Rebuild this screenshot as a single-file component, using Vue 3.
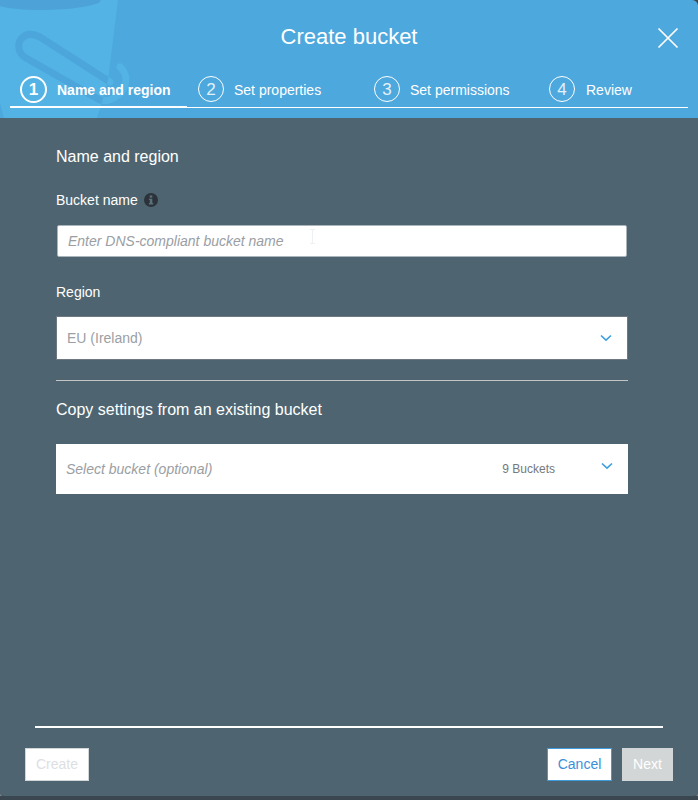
<script setup>
const steps = [
  { n: 1, label: 'Name and region', active: true },
  { n: 2, label: 'Set properties' },
  { n: 3, label: 'Set permissions' },
  { n: 4, label: 'Review' }
]
const handle = 'M120 67C127 73 128 83 122 91C116 99 106 103 98 99L26 58C17 53 17 42 23 37C28 33 34 34 40 37L110 82'
</script>

<template>
  <div class="modal">
    <header class="head">
      <svg class="art" width="140" height="118" viewBox="0 0 140 118" aria-hidden="true">
        <defs>
          <clipPath id="bucket-shape">
            <path d="M0 0H118L108 80Q103 100 97 118H4L0 103Z" />
          </clipPath>
        </defs>
        <path d="M0 0H118L108 80Q103 100 97 118H4L0 103Z" fill="#53b3e4" />
        <path d="M0 0H101C100 6 70 10 40 10C20 10 6 8 0 6Z" fill="#4da3d8" />
        <path :d="handle" fill="none" stroke="#53b3e4" stroke-width="7" stroke-linecap="round" />
        <g clip-path="url(#bucket-shape)">
          <path :d="handle" fill="none" stroke="#4da6db" stroke-width="7" stroke-linecap="round" />
        </g>
      </svg>
      <div class="title-row">
        <h1 class="title">Create bucket</h1>
        <svg class="close" width="22" height="22" viewBox="0 0 22 22" aria-label="Close">
          <path d="M1.5 1.5L20.5 20.5M20.5 1.5L1.5 20.5" stroke="#fff" stroke-width="1.7" fill="none" />
        </svg>
      </div>
      <nav class="tabs">
        <div v-for="s in steps" :key="s.n" class="tab" :class="{ active: s.active }">
          <span class="num">{{ s.n }}</span>
          <span class="tab-label">{{ s.label }}</span>
        </div>
      </nav>
    </header>

    <main class="body">
      <section class="form">
        <h2 class="section">Name and region</h2>
        <div class="label-row">
          <label class="label">Bucket name</label>
          <svg class="info" width="14" height="14" viewBox="0 0 14 14" aria-hidden="true">
            <circle cx="7" cy="7" r="7" fill="#2b3239" />
            <rect x="5.7" y="2.4" width="2.6" height="2.3" fill="#5c6f7c" />
            <path d="M4.9 5.7H8.3V10.1H9.2V11.5H4.9V10.1H5.8V7.1H4.9Z" fill="#5c6f7c" />
          </svg>
        </div>
        <div class="input">
          <span class="placeholder">Enter DNS-compliant bucket name</span>
          <span class="caret"></span>
        </div>
        <label class="label region-label">Region</label>
        <div class="select region">
          <span class="value">EU (Ireland)</span>
          <svg class="chev" width="12" height="8" viewBox="0 0 12 8" aria-hidden="true">
            <path d="M1 1.5L6 6.2L11 1.5" fill="none" stroke="#3b9fe0" stroke-width="1.6" />
          </svg>
        </div>
        <hr class="rule" />
        <h2 class="section copy">Copy settings from an existing bucket</h2>
        <div class="select bucket">
          <span class="placeholder small">Select bucket (optional)</span>
          <span class="count">9 Buckets</span>
          <svg class="chev up" width="12" height="8" viewBox="0 0 12 8" aria-hidden="true">
            <path d="M1 1.5L6 6.2L11 1.5" fill="none" stroke="#3b9fe0" stroke-width="1.6" />
          </svg>
        </div>
      </section>

      <footer class="foot">
        <div class="foot-line"></div>
        <div class="actions">
          <button class="btn create" type="button">Create</button>
          <div class="right">
            <button class="btn cancel" type="button">Cancel</button>
            <button class="btn next" type="button">Next</button>
          </div>
        </div>
      </footer>
    </main>
  </div>
</template>

<style>
html, body { margin: 0; background: linear-gradient(#3a4750 0 20px, #88979f 20px); }
</style>

<style scoped>
.modal {
  width: 698px;
  height: 796px;
  display: flex;
  flex-direction: column;
  font-family: "Liberation Sans", Arial, sans-serif;
  background: #4e6571;
  border-radius: 0 6px 5px 5px;
  box-shadow: 0 1px 2px #2f3a42;
  overflow: hidden;
}
.head {
  position: relative;
  height: 118px;
  flex: none;
  background: #4da8dd;
  color: #fff;
  box-sizing: border-box;
  overflow: hidden;
}
.art { position: absolute; left: 0; top: 0; }
.title-row {
  position: relative;
  height: 76px;
  display: flex;
  justify-content: center;
}
.title {
  margin: 24px 0 0;
  font-size: 22px;
  line-height: 26px;
  font-weight: 400;
}
.close { position: absolute; left: 657px; top: 27px; }
.tabs {
  position: relative;
  margin: 0 10px;
  width: 678px;
  height: 32px;
  display: flex;
  box-sizing: border-box;
  border-bottom: 1px solid #fff;
}
.tab {
  flex: none;
  width: 176px;
  height: 31px;
  box-sizing: border-box;
  padding-left: 11px;
  display: flex;
  align-items: flex-start;
  gap: 10px;
  font-size: 14px;
}
.tab:first-child { width: 177px; padding-left: 10px; }
.tab:last-child { padding-left: 10px; gap: 11px; }
.tab.active { height: 32px; border-bottom: 2px solid #fff; margin-bottom: -1px; }
.num {
  width: 26px;
  height: 26px;
  box-sizing: border-box;
  border: 1px solid #fff;
  border-radius: 50%;
  padding-top: 1px;
  display: flex;
  align-items: center;
  justify-content: center;
  font-size: 17px;
  color: #e3f1fa;
  flex: none;
}
.active .num { border-width: 2px; width: 27px; height: 27px; color: #fff; font-weight: 700; }
.tab-label { line-height: 28px; }
.active .tab-label { font-weight: 700; }
.body {
  flex: 1;
  display: flex;
  flex-direction: column;
  justify-content: space-between;
  background: #4e6571;
  color: #fff;
}
.form { padding: 29px 70px 0 56px; display: flex; flex-direction: column; }
.section {
  margin: 0;
  font-size: 16px;
  line-height: 20px;
  font-weight: 400;
}
.label-row {
  margin-top: 24px;
  height: 18px;
  display: flex;
  align-items: center;
  gap: 6px;
}
.label { font-size: 14px; line-height: 18px; }
.info { flex: none; }
.input {
  position: relative;
  margin: 16px 1px 0;
  height: 32px;
  box-sizing: border-box;
  background: #fff;
  border: 1px solid #aab4ba;
  border-radius: 2px;
  padding-left: 10px;
  display: flex;
  align-items: center;
}
.placeholder {
  font-size: 14px;
  font-style: italic;
  color: #9a9ea3;
}
.caret {
  position: absolute;
  left: 252px;
  top: 3px;
  width: 5px;
  height: 15px;
  box-sizing: border-box;
  border-top: 1px solid #eef1f3;
  border-bottom: 1px solid #eef1f3;
  background: linear-gradient(90deg, transparent 2px, #eef1f3 2px, #eef1f3 3px, transparent 3px);
}
.region-label { margin-top: 26px; }
.select {
  background: #fff;
  display: flex;
  align-items: center;
  box-sizing: border-box;
}
.region {
  margin-top: 15px;
  height: 44px;
  border: 1px solid #6f7880;
  padding: 0 15px 0 10px;
  justify-content: space-between;
}
.value { font-size: 14px; color: #9ba0a5; }
.rule {
  margin: 20px 0 0;
  border: 0;
  height: 1px;
  background: #c3c5c5;
}
.copy { margin-top: 19px; }
.bucket {
  margin-top: 24px;
  height: 50px;
  padding: 0 15px 0 10px;
}
.small { font-size: 14px; flex: 1; }
.count {
  font-size: 12px;
  color: #75787c;
  margin-right: 46px;
}
.up { position: relative; top: -3px; }
.foot { padding: 0 25px 15px; }
.foot-line {
  height: 2px;
  margin: 0 10px 20px;
  background: #fff;
}
.actions { display: flex; justify-content: space-between; }
.right { display: flex; gap: 10px; }
.btn {
  height: 33px;
  box-sizing: border-box;
  padding: 0 0 2px;
  font-family: inherit;
  font-size: 14px;
  background: #fff;
}
.create {
  width: 64px;
  border: 1px solid #d3d6d6;
  color: #dde0e3;
}
.cancel {
  width: 65px;
  border: 1px solid #3f9bdc;
  color: #3b8fd8;
}
.next {
  width: 51px;
  border: 1px solid #d3d6d6;
  background: #d3d6d6;
  color: #fff;
}
</style>
